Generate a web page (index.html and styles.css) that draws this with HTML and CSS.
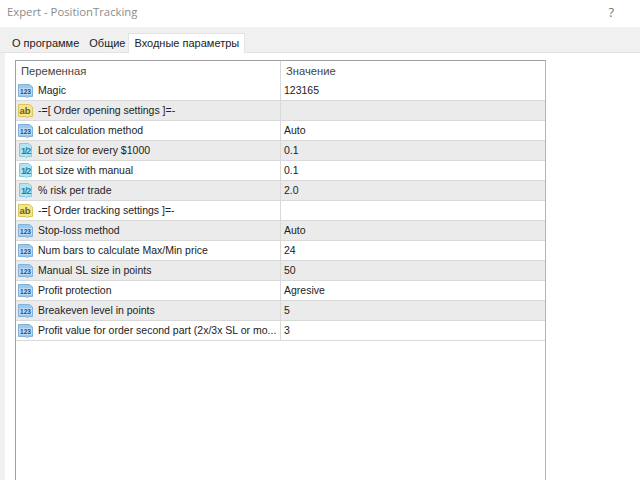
FILE: index.html
```html
<!DOCTYPE html>
<html lang="ru">
<head>
  <meta charset="UTF-8" />
  <title>Expert - PositionTracking</title>
  <link rel="stylesheet" href="styles.css">
</head>
<body>

  <!-- Заголовок окна -->
  <header class="titlebar">
    <span class="titlebar-text">Expert - PositionTracking</span>
    <span class="titlebar-help">?</span>
  </header>

  <!-- Вкладки -->
  <nav class="tabs">
    <div class="tab">О программе</div>
    <div class="tab">Общие</div>
    <div class="tab tab-active">Входные параметры</div>
  </nav>

  <main class="panel">
    <div class="grid">
      <div class="row row-head">
        <div class="cell cell-name">Переменная</div>
        <div class="cell cell-value">Значение</div>
      </div>
      <div class="row"><div class="cell cell-name"><svg class="ico" viewBox="0 0 17 17"><path class="ico-int" d="M1.5 2.5 H12.5 L15.5 5 V14.5 H11.5 L10.5 16 L9 14.5 H1.5 Z"/><rect class="ico-band" x="2" y="6" width="13" height="7"/><text x="8.5" y="12" class="txt-int">123</text></svg><span>Magic</span></div><div class="cell cell-value">123165</div></div>
      <div class="row row-alt"><div class="cell cell-name"><svg class="ico" viewBox="0 0 17 17"><path class="ico-str" d="M1.5 2.5 H12.5 L15.5 5 V14.5 H11.5 L10.5 16 L9 14.5 H1.5 Z"/><text x="8" y="12" class="txt-str">ab</text></svg><span>-=[ Order opening settings ]=-</span></div><div class="cell cell-value"></div></div>
      <div class="row"><div class="cell cell-name"><svg class="ico" viewBox="0 0 17 17"><path class="ico-int" d="M1.5 2.5 H12.5 L15.5 5 V14.5 H11.5 L10.5 16 L9 14.5 H1.5 Z"/><rect class="ico-band" x="2" y="6" width="13" height="7"/><text x="8.5" y="12" class="txt-int">123</text></svg><span>Lot calculation method</span></div><div class="cell cell-value">Auto</div></div>
      <div class="row row-alt"><div class="cell cell-name"><svg class="ico" viewBox="0 0 17 17"><path class="ico-dbl" d="M2.5 1.5 H11.5 L14.5 4 V14.5 H10.5 L9.5 16 L8 14.5 H2.5 Z"/><text x="8.5" y="11.5" class="txt-dbl">1/2</text></svg><span>Lot size for every $1000</span></div><div class="cell cell-value">0.1</div></div>
      <div class="row"><div class="cell cell-name"><svg class="ico" viewBox="0 0 17 17"><path class="ico-dbl" d="M2.5 1.5 H11.5 L14.5 4 V14.5 H10.5 L9.5 16 L8 14.5 H2.5 Z"/><text x="8.5" y="11.5" class="txt-dbl">1/2</text></svg><span>Lot size with manual</span></div><div class="cell cell-value">0.1</div></div>
      <div class="row row-alt"><div class="cell cell-name"><svg class="ico" viewBox="0 0 17 17"><path class="ico-dbl" d="M2.5 1.5 H11.5 L14.5 4 V14.5 H10.5 L9.5 16 L8 14.5 H2.5 Z"/><text x="8.5" y="11.5" class="txt-dbl">1/2</text></svg><span>% risk per trade</span></div><div class="cell cell-value">2.0</div></div>
      <div class="row"><div class="cell cell-name"><svg class="ico" viewBox="0 0 17 17"><path class="ico-str" d="M1.5 2.5 H12.5 L15.5 5 V14.5 H11.5 L10.5 16 L9 14.5 H1.5 Z"/><text x="8" y="12" class="txt-str">ab</text></svg><span>-=[ Order tracking settings ]=-</span></div><div class="cell cell-value"></div></div>
      <div class="row row-alt"><div class="cell cell-name"><svg class="ico" viewBox="0 0 17 17"><path class="ico-int" d="M1.5 2.5 H12.5 L15.5 5 V14.5 H11.5 L10.5 16 L9 14.5 H1.5 Z"/><rect class="ico-band" x="2" y="6" width="13" height="7"/><text x="8.5" y="12" class="txt-int">123</text></svg><span>Stop-loss method</span></div><div class="cell cell-value">Auto</div></div>
      <div class="row"><div class="cell cell-name"><svg class="ico" viewBox="0 0 17 17"><path class="ico-int" d="M1.5 2.5 H12.5 L15.5 5 V14.5 H11.5 L10.5 16 L9 14.5 H1.5 Z"/><rect class="ico-band" x="2" y="6" width="13" height="7"/><text x="8.5" y="12" class="txt-int">123</text></svg><span>Num bars to calculate Max/Min price</span></div><div class="cell cell-value">24</div></div>
      <div class="row row-alt"><div class="cell cell-name"><svg class="ico" viewBox="0 0 17 17"><path class="ico-int" d="M1.5 2.5 H12.5 L15.5 5 V14.5 H11.5 L10.5 16 L9 14.5 H1.5 Z"/><rect class="ico-band" x="2" y="6" width="13" height="7"/><text x="8.5" y="12" class="txt-int">123</text></svg><span>Manual SL size in points</span></div><div class="cell cell-value">50</div></div>
      <div class="row"><div class="cell cell-name"><svg class="ico" viewBox="0 0 17 17"><path class="ico-int" d="M1.5 2.5 H12.5 L15.5 5 V14.5 H11.5 L10.5 16 L9 14.5 H1.5 Z"/><rect class="ico-band" x="2" y="6" width="13" height="7"/><text x="8.5" y="12" class="txt-int">123</text></svg><span>Profit protection</span></div><div class="cell cell-value">Agresive</div></div>
      <div class="row row-alt"><div class="cell cell-name"><svg class="ico" viewBox="0 0 17 17"><path class="ico-int" d="M1.5 2.5 H12.5 L15.5 5 V14.5 H11.5 L10.5 16 L9 14.5 H1.5 Z"/><rect class="ico-band" x="2" y="6" width="13" height="7"/><text x="8.5" y="12" class="txt-int">123</text></svg><span>Breakeven level in points</span></div><div class="cell cell-value">5</div></div>
      <div class="row"><div class="cell cell-name"><svg class="ico" viewBox="0 0 17 17"><path class="ico-int" d="M1.5 2.5 H12.5 L15.5 5 V14.5 H11.5 L10.5 16 L9 14.5 H1.5 Z"/><rect class="ico-band" x="2" y="6" width="13" height="7"/><text x="8.5" y="12" class="txt-int">123</text></svg><span>Profit value for order second part (2x/3x SL or mo...</span></div><div class="cell cell-value">3</div></div>
    </div>
  </main>

</body>
</html>
```

FILE: styles.css
```css
body {
  margin: 0;
  height: 480px;
  overflow: hidden;
  display: flex;
  flex-direction: column;
  font-family: "Liberation Sans", Arial, sans-serif;
  font-size: 10.5px;
  color: #222;
  background: #fff;
}

.titlebar {
  height: 27px;
  flex: none;
  display: flex;
  justify-content: space-between;
  align-items: center;
  padding: 0 26px 4px 7px;
  box-sizing: border-box;
  color: #8c8c8c;
  font-family: "Open Sans", sans-serif;
  font-size: 11.3px;
}

.titlebar-help {
  font-size: 13px;
  color: #777;
}

.tabs {
  height: 26px;
  flex: none;
  display: flex;
  align-items: flex-end;
  padding-left: 8px;
  box-sizing: border-box;
  background: #f0f0f0;
  border-bottom: 1px solid #e3e3e3;
  font-size: 11px;
}

.tab {
  height: 19px;
  padding: 1px 4px 0;
  box-sizing: border-box;
  display: flex;
  align-items: center;
}

.tab + .tab {
  padding: 1px 3px 0 6px;
}

.tab-active,
.tab + .tab-active {
  height: 20px;
  padding: 0 5px 2px;
  background: #fff;
  border: 1px solid #e3e3e3;
  border-bottom: none;
  margin-bottom: -1px;
}

.panel {
  flex: 1;
  padding: 7px 94px 0 10px;
  margin-left: 5px;
  background: #fff;
  box-shadow: -5px 0 0 #f0f0f0;
}

.grid {
  height: 100%;
  box-sizing: border-box;
  border: 1px solid #a0a0a0;
  border-right-color: #b4b4b4;
  border-bottom: none;
}

.row {
  height: 20px;
  display: flex;
  box-sizing: border-box;
  border-bottom: 1px solid #d9d9d9;
}

.row-alt {
  background: #ebebeb;
}

.row-head {
  border-bottom: none;
  color: #444;
  font-size: 11.2px;
}

.cell {
  display: flex;
  align-items: center;
  box-sizing: border-box;
  white-space: nowrap;
  overflow: hidden;
}

.cell span,
.cell-value {
  padding-bottom: 2px;
}

.cell-name {
  width: 265px;
  padding-left: 1px;
  border-right: 1px solid #d9d9d9;
}

.cell-value {
  flex: 1;
  padding-left: 3px;
}

.row-head .cell-name,
.row-head .cell-value {
  padding-left: 5px;
  padding-bottom: 0;
}

.ico {
  width: 17px;
  height: 17px;
  flex: none;
  margin-right: 4px;
}

.ico-int {
  fill: #9cc8ec;
  stroke: #7fb2de;
}

.ico-band {
  fill: #bcdaf4;
}

.ico-str {
  fill: #f4e68c;
  stroke: #d8c65a;
}

.ico-dbl {
  fill: #b4e4f2;
  stroke: #85cbe0;
}

.ico text {
  text-anchor: middle;
  font-weight: bold;
}

.txt-int {
  font-size: 6.5px;
  fill: #1f4f86;
}

.txt-str {
  font-size: 9.5px;
  fill: #6e5c10;
}

.txt-dbl {
  font-size: 9px;
  letter-spacing: -1.2px;
  fill: #2c7f9c;
}
```
